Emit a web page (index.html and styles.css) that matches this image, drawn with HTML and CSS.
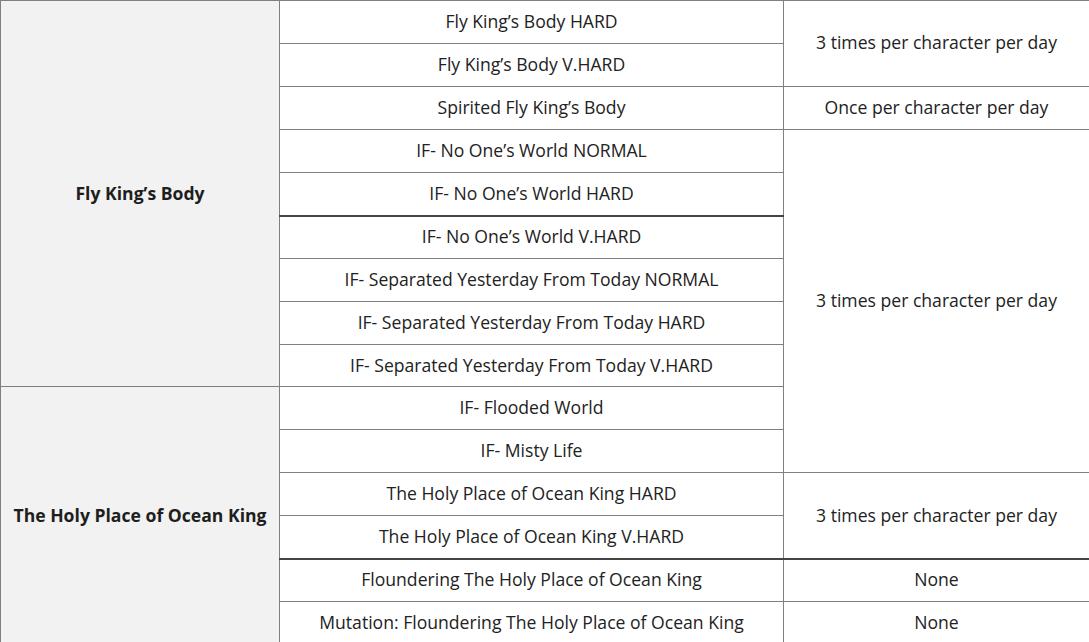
FILE: index.html
```html
<!DOCTYPE html>
<html lang="en">
<head>
    <meta charset="UTF-8">
    <meta name="viewport" content="width=device-width, initial-scale=1.0">
    <title>Daily Entry Limits</title>
    <link rel="stylesheet" href="styles.css">
</head>
<body>
    <table class="limits">
        <colgroup>
            <col class="col-area">
            <col class="col-dungeon">
            <col class="col-limit">
        </colgroup>
        <tbody>
            <tr>
                <th class="area" rowspan="9">Fly King’s Body</th>
                <td>Fly King’s Body HARD</td>
                <td rowspan="2">3 times per character per day</td>
            </tr>
            <tr>
                <td>Fly King’s Body V.HARD</td>
            </tr>
            <tr>
                <td>Spirited Fly King’s Body</td>
                <td>Once per character per day</td>
            </tr>
            <tr>
                <td>IF- No One’s World NORMAL</td>
                <td rowspan="8">3 times per character per day</td>
            </tr>
            <tr>
                <td>IF- No One’s World HARD</td>
            </tr>
            <tr>
                <td class="split">IF- No One’s World V.HARD</td>
            </tr>
            <tr>
                <td>IF- Separated Yesterday From Today NORMAL</td>
            </tr>
            <tr>
                <td>IF- Separated Yesterday From Today HARD</td>
            </tr>
            <tr>
                <td>IF- Separated Yesterday From Today V.HARD</td>
            </tr>
            <tr>
                <th class="area" rowspan="6">The Holy Place of Ocean King</th>
                <td>IF- Flooded World</td>
            </tr>
            <tr>
                <td>IF- Misty Life</td>
            </tr>
            <tr>
                <td>The Holy Place of Ocean King HARD</td>
                <td rowspan="2">3 times per character per day</td>
            </tr>
            <tr>
                <td>The Holy Place of Ocean King V.HARD</td>
            </tr>
            <tr>
                <td class="split">Floundering The Holy Place of Ocean King</td>
                <td class="split">None</td>
            </tr>
            <tr>
                <td>Mutation: Floundering The Holy Place of Ocean King</td>
                <td>None</td>
            </tr>
        </tbody>
    </table>
</body>
</html>
```

FILE: styles.css
```css
body {
    margin: 0;
    padding: 0;
    background-color: #fff;
    font-family: 'Open Sans', 'Noto Sans', sans-serif;
    font-size: 17.6px;
    color: #222;
}
.limits {
    width: 1089px;
    border-collapse: collapse;
    table-layout: fixed;
}
.col-area {
    width: 279px;
}
.col-dungeon {
    width: 504px;
}
.col-limit {
    width: 306px;
}
.limits th,
.limits td {
    border: 1px solid #808080;
    padding: 9px 4px;
    line-height: 23.93px;
    text-align: center;
    vertical-align: middle;
    font-weight: normal;
}
.limits .area {
    background-color: #f2f2f2;
    font-weight: bold;
    color: #1e1e1e;
}
.limits .split {
    border-top: 2px solid #444;
    padding-top: 8px;
}
```
